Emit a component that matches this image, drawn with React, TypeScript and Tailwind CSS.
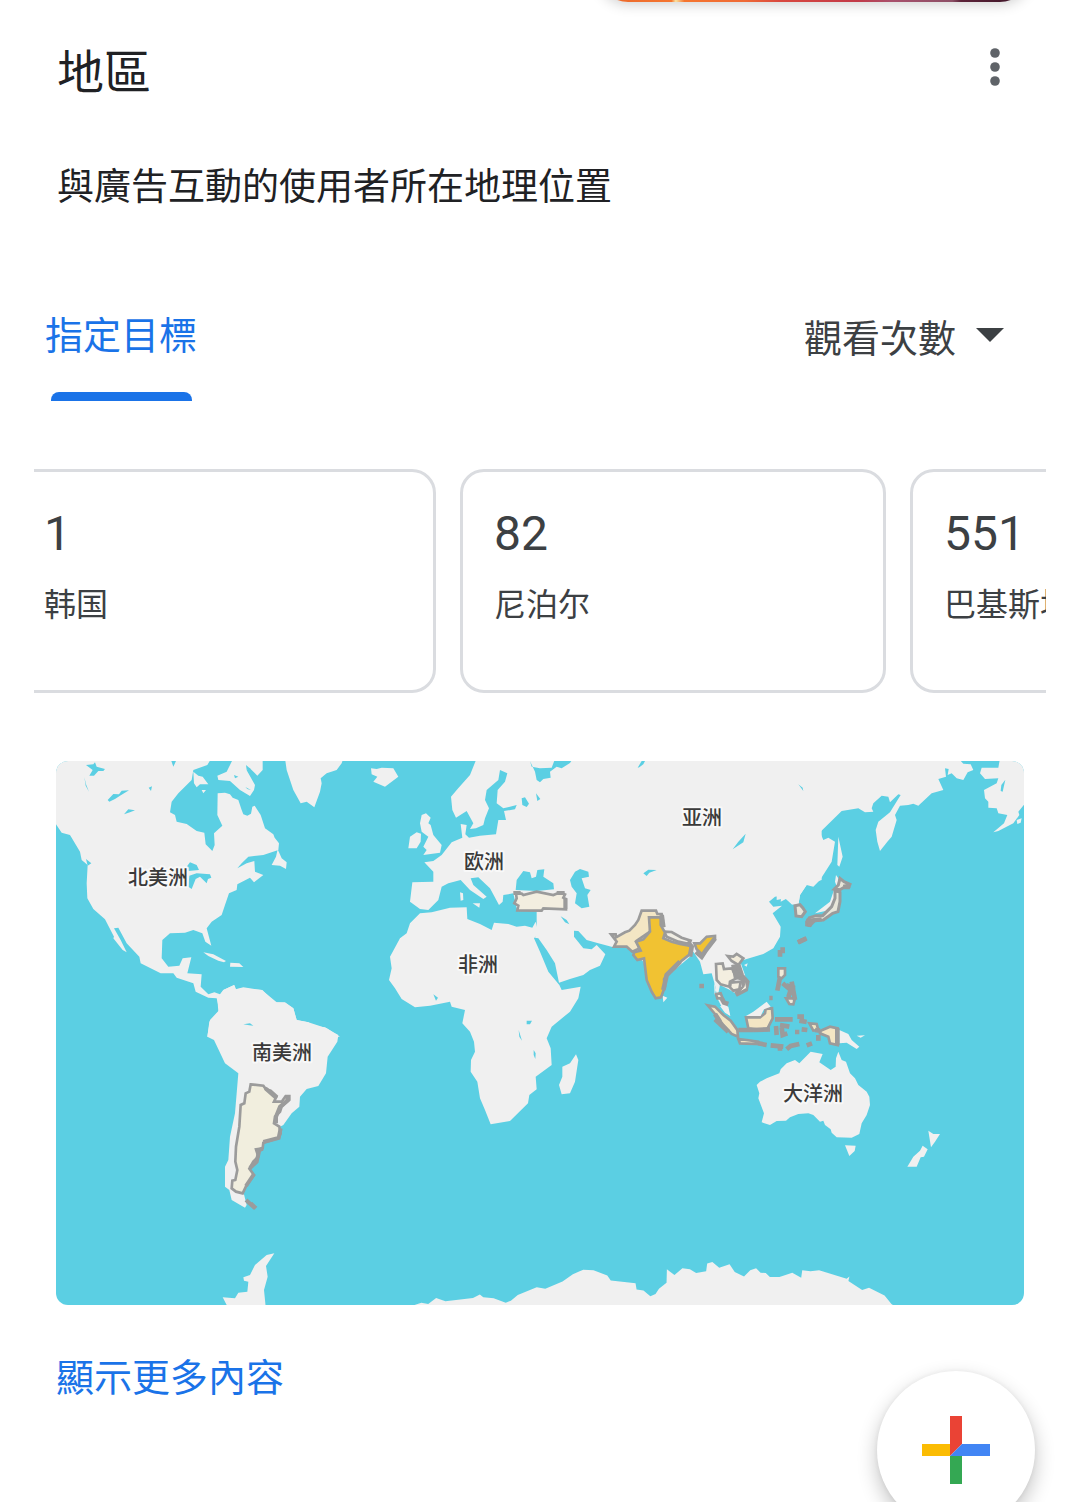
const FONT = 'font-["Noto_Sans_CJK_TC","Noto_Sans_CJK_SC",sans-serif]';
const FONT_SC = 'font-["Noto_Sans_CJK_SC",sans-serif]';

const cards = [
  { value: "1", name: "韩国" },
  { value: "82", name: "尼泊尔" },
  { value: "551", name: "巴基斯坦" },
];

const labels = [
  { name: "北美洲", x: 158, y: 885 },
  { name: "南美洲", x: 282, y: 1060 },
  { name: "欧洲", x: 484, y: 869 },
  { name: "非洲", x: 478, y: 972 },
  { name: "亚洲", x: 702, y: 825 },
  { name: "大洋洲", x: 813, y: 1101 },
];

const LAND = "#f0f0f0";
const SEA = "#5bcfe3";
const EDGE = "#9b9b9b";

function WorldMap() {
  return (
    <svg
      viewBox="56 761 968 544"
      role="img"
      aria-label="世界地圖"
      className="mt-[68px] block w-full rounded-xl"
    >
      <rect x="56" y="761" width="968" height="544" fill={SEA} />

      {/* North America, Greenland */}
      <g transform="translate(50 755) scale(0.33333)" fill={LAND}>
        <path d="M0 0H490L472 30 430 45 425 75 385 115 365 140 360 172 375 180 380 200 410 207 440 228 463 233 467 268 487 288 494 270 492 235 517 212 502 180 503 115 525 113 540 118 548 128 565 135 575 165 580 178 592 182 603 176 607 155 614 152 632 180 645 220 670 238 674 248 687 265 685 285 640 300 595 305 575 325 562 340 590 325 613 318 615 350 640 360 612 382 600 368 562 388 560 405 537 415 525 450 515 480 485 500 470 520 484 572 466 560 457 535 430 525 405 533 360 535 337 555 335 610 355 635 388 632 398 610 424 607 412 655 455 658 452 695 475 718 493 712 510 718 520 705 552 690 557 703 580 697 635 705 680 742 705 742 730 760 740 795 775 802 830 820 870 845H472L480 795 508 765 500 730 475 728 437 710 430 685 380 668 370 655 332 655 272 625 268 605 230 565 205 518 192 520 212 555 230 592 218 585 190 550 192 545 165 493 130 462 112 430 110 385 113 330 95 315 90 290 60 240 35 233 18 208 0 190Z" />
        <path d="M502 62 530 50 550 10H638V45L622 62 598 38 590 46 615 90 612 105 600 123 570 105 540 78 505 75Z" />
        <path d="M430 50 445 62 458 65 475 88 450 88 440 97 432 85ZM455 105 468 105 460 115Z" />
        <path d="M705 10H880L875 25 860 45 830 55 812 70 815 85 810 110 793 157 770 140 752 145 730 105 710 45Z" />
        <path d="M683 283 695 310 710 322 708 342 690 332 665 330 678 305Z" />
        <path d="M460 592 490 598 528 618 522 622 505 617 475 603ZM541 623 568 625 580 636 540 635Z" />
        <g fill={SEA}>
          <path d="M108 30 130 28 135 22 140 35 165 42 160 48 145 48 132 62 118 62 128 45ZM103 66 108 88 117 110 107 92ZM173 135 190 117 207 118 215 107 237 106 210 122 195 132 178 140ZM222 178 235 163 255 166 240 172ZM296 98 306 94 303 108ZM364 18H378L370 35ZM410 335 420 322 440 330 447 345 415 348ZM418 362 440 355 480 358 484 368 474 372 470 385 450 365 437 372 425 402 415 395ZM108 312 124 325 113 332ZM580 808 600 806 608 811 590 812Z" />
          <path d="M552 60 565 65 555 70ZM588 30 602 42 590 45ZM586 96 604 106 592 102Z" />
        </g>
      </g>

      {/* South America, Antarctic Peninsula */}
      <g transform="translate(200 970) scale(0.33333)" fill={LAND}>
        <path d="M57 80 70 60 103 45 108 58 130 55 187 60 225 97 255 98 280 115 290 150 325 157 340 168 375 172 400 187 415 195 412 215 383 260 378 310 355 348 320 357 300 380 298 410 275 430 250 465 240 470 190 520 150 600 130 665 140 705 135 713 95 690 88 660 75 650 75 590 85 570 90 500 105 430 115 310 75 280 42 210 22 200 28 155 55 125 52 85Z" />
        <path d="M223 850 198 888 203 920 192 960 198 1020H75L80 1005 68 982 105 985 115 968 142 965 145 935 132 932 130 922 150 915 165 885 200 855Z" />
        <path d="M130 163 150 160 160 167 148 166Z" fill={SEA} />
        <path
          d="M152 343 190 347 198 358 212 362 230 378 222 395 245 395 257 378 268 378 268 390 245 410 240 425 225 440 222 460 238 470 242 490 236 504 190 518 188 535 168 538 175 560 160 575 148 596 162 615 140 645 128 670 108 665 95 655 97 632 106 630 112 600 106 575 108 530 118 470 122 405 133 400 137 370 148 365Z"
          fill="#f1eede"
          stroke={EDGE}
          strokeWidth="8"
        />
        <path d="M242 475 236 504 190 516M188 536 168 545M178 540 170 575 150 594M162 612 138 648M196 355 230 385M262 378 262 392 240 410 228 440 228 460M138 690 165 715M152 700 168 715" fill="none" stroke={EDGE} strokeWidth="12" />
      </g>

      {/* Europe, Africa, Middle East */}
      <g transform="translate(370 755) scale(0.33333)" fill={LAND}>
        <path d="M320 10 300 60 262 103 243 125 247 165 258 188 290 168 310 205 300 222 318 220 340 210 345 190 357 160 345 135 350 105 385 75 390 45 412 55 405 80 383 105 380 145 400 160 440 150 435 163 402 168 408 195 385 195 378 238 330 242 297 248 286 238 290 210 272 207 277 248 245 262 215 300 190 318 163 322 190 350 190 380 127 382 120 440 150 462 175 465 205 435 215 395 235 385 272 375 300 405 340 432 350 425 310 390 302 370 325 367 360 400 387 450 398 440 400 420 430 415 440 460 500 465 500 530 495 548 505 550 530 585 555 625 567 683 600 672 640 660 660 645 690 632 706 598 680 570 665 583 640 580 612 545 612 527 625 528 650 555 685 565 730 577 760 575 800 560V10Z" />
        <path d="M150 475 185 472 240 458 290 457 292 492 330 507 365 525 372 503 415 507 440 515 465 512 487 518 497 500 506 535 492 550 510 590 535 650 568 690 575 705 632 695 625 730 600 770 545 815 530 850 542 880 545 930 497 965 500 1003 478 1020 474 1045 420 1098 362 1108 345 1065 330 1030 322 980 302 950 303 915 315 890 312 860 300 830 277 805 285 765 245 755 240 740 180 752 135 757 95 732 75 700 57 675 65 640 60 605 90 550 110 535 120 505Z" />
        <path d="M3 40 20 42 35 38 70 40 85 65 45 95 10 80 22 65 5 58ZM155 180 168 175 182 188 175 205 182 210 190 240 215 270 210 293 160 300 170 285 160 275 175 245 155 230 150 205ZM120 245 140 232 153 236 152 260 140 280 115 280ZM270 412 279 415 280 435 272 437ZM308 445 330 445 328 458ZM618 898 625 915 615 980 600 1015 575 1018 567 990 577 965 577 935 600 925Z" />
        <g fill={SEA}>
          <path d="M437 405 440 375 460 348 480 352 485 370 498 365 502 345 523 343 520 365 550 385 552 403 500 408ZM600 375 615 350 630 342 655 350 657 365 635 370 645 400 662 405 652 420 658 455 635 460 615 445 620 415 605 395Z" />
          <path d="M480 18 485 35 510 40 545 38 555 12H608L600 24 575 40 560 35 540 50 542 68 520 72 510 82 500 75 495 50ZM455 130 465 127 477 146 470 156 457 150ZM498 115 511 132 502 138ZM572 484 590 495 598 508 585 502ZM190 718 204 728 198 737ZM470 797 486 797 480 808 470 808ZM446 825 456 857 448 845ZM491 885 497 895 496 912 491 900Z" />
        </g>
        <path
          d="M438 416 455 416 460 420 500 410 550 420 570 412 585 418 580 428 588 432 588 463 520 460 515 467 442 466 445 452 433 445 440 430Z"
          fill="#f3eee0"
          stroke={EDGE}
          strokeWidth="8"
        />
        <path d="M560 414H584M586 430V462M430 414H452" fill="none" stroke={EDGE} strokeWidth="12" />
      </g>

      {/* Central and South Asia */}
      <g transform="translate(580 755) scale(0.33333)" fill={LAND}>
        <path d="M95 10H725V375L680 390 660 420 655 450 635 448 622 430 602 440 604 422 585 425 567 440 580 455 606 452 578 475 602 515 600 545 580 580 550 597 500 612 480 618 495 660 502 700 470 718 450 705 420 690 415 715 440 745 450 782 430 765 412 730 405 690 395 655 370 658 360 620 340 590 330 605 260 665 245 720 232 730 215 700 190 620 165 595 145 580 100 575 80 560ZM248 722 262 728 250 742ZM492 630 503 625 500 635Z" />
        <path d="M173 38 185 18H195L190 28 178 37ZM612 15 622 22 620 32ZM655 88 668 98 670 108ZM458 283 475 260 497 236 490 262ZM190 355 205 344 230 345 208 353 200 363ZM660 355 685 342 665 354Z" fill={SEA} />
      </g>

      {/* East Asia, Siberia, Alaska */}
      <g transform="translate(780 755) scale(0.33333)" fill={LAND}>
        <path d="M-10 10H535L550 26 572 28 580 45 563 52 550 75 530 70 515 55 503 60 506 42 495 40 498 65 475 72 490 105 455 115 415 152 400 146 385 150 360 152 345 180 350 195 335 245 322 260 300 288 292 260 287 225 295 200 330 172 362 120 355 118 330 142 325 125 305 122 280 145 275 160 280 170 255 172 235 160 185 168 120 232 130 255 145 248 165 260 155 320 120 375 100 395 80 390 60 420 55 450 35 448 15 430-10 435Z" />
        <path d="M660 10 655 38 605 38 600 55 615 72 655 70 650 85 612 105 615 130 625 140 625 158 650 160 655 175 682 180 672 205 640 232 655 228 700 205 718 180 715 170 740 140V10ZM710 195 725 190 722 203 712 207Z" />
        <path d="M175 245 188 305 178 335 172 330ZM168 360 175 370 172 400 165 380ZM105 475 150 440 162 405 168 440 150 465Z" />
        <path d="M676 74 668 110 662 108 664 90ZM55 88 68 98 70 108Z" fill={SEA} />
        <g stroke={EDGE} strokeWidth="9" fill="#e8e6da">
          <path d="M180 370 192 380 210 388 206 398 190 398 180 404 163 402 175 390Z" />
          <path d="M165 405 180 412 180 440 174 470 158 475 130 495 105 496 90 512 80 510 80 500 88 488 108 482 128 482 155 455 165 430Z" />
          <path d="M45 452 60 449 68 458 76 470 65 485 48 483Z" />
        </g>
        <path d="M80 498 125 493M85 490 90 515M162 407H183M53 562 80 550M190 396 210 392" fill="none" stroke={EDGE} strokeWidth="13" />
      </g>

      {/* South and Southeast Asia */}
      <g transform="translate(600 890) scale(0.33333)" fill={LAND} strokeWidth="8">
        <g stroke={EDGE}>
          <path fill="#f3e6c4" d="M33 133H47L48 142 75 127 88 122 105 105 115 90 125 62H168L172 72 185 72 188 88 155 85 150 125 110 152 118 175 97 185 80 170 42 170 50 155Z" />
          <path fill="#f1eee4" d="M192 125 215 126 245 143 272 152 268 162 235 155 200 140Z" />
          <path fill="#f1c232" d="M147 82 182 82 182 105 195 128 190 145 215 155 240 162 272 168 270 192 245 212 225 235 202 253 192 268 195 290 183 322 167 325 155 305 140 270 132 205 112 210 100 195 103 187 122 182 108 155 130 148 150 125Z" />
          <path fill="#f1c232" d="M283 160 300 160 320 140 345 138 345 148 325 172 308 195 290 178Z" />
          <path fill="#f3eee0" d="M348 222 368 220 372 237 395 235 415 262 390 275 388 290 362 283 350 270Z" />
          <path fill="#f1ebda" d="M383 198 400 200 410 192 430 205 415 225 395 213Z" />
          <path fill={EDGE} d="M398 228 418 225 428 255 445 275 440 300 412 315 408 308 430 290 425 268 405 262Z" />
          <path fill="#f3eee0" d="M392 278 422 275 418 298 400 302 390 292Z" />
          <path fill="#f3eee0" d="M436 272 440 295 418 306 432 290Z" strokeWidth="3" />
          <path fill="#f3e6c4" d="M323 346 345 350 370 375 392 392 412 420 414 440 395 432 370 405 345 372Z" />
          <path fill="#f3e6c4" d="M415 447 440 450 475 455 480 462 420 460Z" />
          <path fill="#f3e6c4" d="M438 382 480 382 495 370 497 357 516 355 518 385 500 420 470 418 445 415Z" />
          <path fill="#f3e6c4" d="M628 400 650 402 655 420 640 422ZM662 422 690 410 713 415V465L690 460 685 440 660 430Z" />
          <path fill="#f1ebda" d="M535 235 555 235 555 255 545 265 535 260ZM558 325 585 325 580 343 568 342ZM566 285 582 290 580 305 568 300Z" />
          <path fill="#f1ebda" d="M348 312 362 310 368 325 352 325Z" />
        </g>
        <path d="M438 378 460 365 500 335 512 350 492 358 482 378ZM360 348 385 350 391 378 375 368ZM718 420 745 432 755 450 778 470 770 477 740 458 718 460ZM770 437 795 436 782 443ZM342 275 348 300 344 315Z" />
        <path
          d="M262 155 275 170 270 200M345 145 318 180 305 200 288 185M185 75 190 112M240 215 200 255 190 300M400 240 420 260M365 325 372 338 385 342M298 288H312M540 180V200M548 172V190M595 157 618 146M540 262 532 302M548 280 572 300 565 322M575 275 585 330M508 324H518M345 388 385 425M415 420H460M460 420 510 418M475 460 500 465M512 466 550 470M540 475V482M560 478 572 468 598 462M620 466 636 460M525 388H578M528 408 530 435M540 405 568 410M545 412 548 435 562 430M592 380 612 380M598 392 620 396M585 426H598M605 418 622 420M645 420 660 422M655 435V452M712 415V466M345 372 360 395"
          fill="none"
          stroke={EDGE}
          strokeWidth="14"
        />
      </g>

      {/* Oceania */}
      <g transform="translate(740 1030) scale(0.33333)" fill={LAND}>
        <path d="M212 65 248 72 238 97 272 120 287 110 288 85 295 65 305 90 318 95 330 130 345 145 355 165 380 185 388 200 390 225 380 255 365 280 358 312 335 323 290 322 275 308 272 298 255 285 250 272 240 275 220 255 205 250 175 252 150 262 138 272 110 273 90 285 65 277 72 250 55 205 58 190 50 165 60 155 80 145 118 130 122 118 140 100 165 90 178 100ZM315 346 347 347 344 363 328 378ZM565 302 580 312 600 312 585 335 573 352ZM548 347 563 358 552 380 542 382 530 410 502 410 520 380 540 362Z" />
      </g>

      {/* Antarctica */}
      <g transform="translate(380 1240) scale(0.3444 0.337)" fill={LAND}>
        <path d="M60 200 100 193 120 186 140 190 163 172 190 182 270 172 290 162 300 170 330 173 365 186 380 180 400 163 455 140 480 145 530 123 560 102 590 88 620 90 660 105 670 120 742 128 745 147 765 150 785 167 800 160 810 145 832 127 833 87 855 104 878 84 900 87 918 98 947 93 950 70 965 65 985 82 1015 72 1030 95 1057 108 1075 90 1092 84 1105 97 1120 98 1132 110 1160 110 1197 97 1223 112 1226 90 1250 93 1275 90 1355 115 1363 108 1360 122 1400 148 1420 142 1465 165 1485 190 1500 200Z" />
      </g>

      <g
        textAnchor="middle"
        fill="#3a3a3a"
        stroke="#f8f8f8"
        strokeWidth="4"
        strokeLinejoin="round"
        paintOrder="stroke"
        className={`${FONT_SC} text-[20px] font-medium`}
      >
        {labels.map((l) => (
          <text key={l.name} x={l.x} y={l.y}>
            {l.name}
          </text>
        ))}
      </g>
    </svg>
  );
}

export default function App() {
  return (
    <div className={`relative min-h-screen overflow-hidden bg-white text-[#202124] ${FONT}`}>
      <div className="absolute -top-[58px] right-[50px] h-[60px] w-[40%] rounded-b-[30px] bg-[linear-gradient(to_right,#e8672c_0%,#f5752f_17%,#fbe3a0_18%,#f5752f_20%,#ef6a35_34%,#d9483f_42%,#c23a48_60%,#a8506c_68%,#8d4f66_82%,#5c2238_84%,#3a1426_100%)] shadow-[0_2px_14px_rgba(0,0,0,0.2)]" />

      <main>
        <header className="flex items-center justify-between px-[57px] pt-[39px]">
          <h1 className="text-[47px] leading-[60px]">地區</h1>
          <button type="button" aria-label="更多選項" className="-mt-1 flex w-14 justify-center">
            <svg viewBox="0 0 10 38" className="h-[38px] w-[10px]" fill="#5f6368">
              <circle cx="5" cy="5" r="4.8" />
              <circle cx="5" cy="19" r="4.8" />
              <circle cx="5" cy="33" r="4.8" />
            </svg>
          </button>
        </header>

        <p className="mt-[61px] px-[57px] text-[37px] leading-[48px]">與廣告互動的使用者所在地理位置</p>

        <div className="mt-[101px] flex items-start justify-between pr-[76px] pl-[45px]">
          <button type="button" className="flex flex-col items-center text-[38px] leading-[48px] text-[#1a73e8]">
            指定目標
            <span className="mt-[35px] h-[9px] w-[141px] rounded-t-lg bg-[#1a73e8]" />
          </button>
          <label className="relative mt-[3px] flex items-center text-[#3c4043]">
            <select
              aria-label="指標"
              className="appearance-none bg-transparent pr-[47px] text-[38px] leading-[48px]"
              defaultValue="views"
            >
              <option value="views">觀看次數</option>
            </select>
            <svg viewBox="0 0 28 14" className="pointer-events-none absolute top-[16px] right-0 h-[14px] w-[28px]" fill="#3c4043">
              <path d="M0 0H28L14 14Z" />
            </svg>
          </label>
        </div>

        <section className="mx-[34px] mt-[68px] overflow-hidden">
          <ul className="-ml-6 flex gap-6">
            {cards.map((c) => (
              <li
                key={c.name}
                className="h-[224px] w-[426px] shrink-0 rounded-3xl border-[3px] border-[#dadce0] px-[31px] pt-8 text-[#3c4043]"
              >
                <p className="font-[Roboto,sans-serif] text-[48px] leading-[60px]">{c.value}</p>
                <p className={`mt-[14px] text-[32px] leading-[48px] ${FONT_SC}`}>{c.name}</p>
              </li>
            ))}
          </ul>
        </section>

        <div className="px-14">
          <WorldMap />
          <a href="#more" className="mt-[46px] inline-block text-[38px] leading-[48px] text-[#1a73e8]">
            顯示更多內容
          </a>
        </div>
      </main>

      <button
        type="button"
        aria-label="新增"
        className="fixed right-[45px] -bottom-[27px] flex size-[158px] items-center justify-center rounded-full bg-white shadow-[0_8px_20px_rgba(0,0,0,0.24),0_0_6px_rgba(0,0,0,0.06)]"
      >
        <svg viewBox="0 0 68 68" className="size-[68px]">
          <path d="M28 0H40V28L28 40Z" fill="#ea4335" />
          <path d="M0 28H28V40H0Z" fill="#fbbc04" />
          <path d="M28 40H40V68H28Z" fill="#34a853" />
          <path d="M40 28H68V40H28Z" fill="#4285f4" />
        </svg>
      </button>
    </div>
  );
}
